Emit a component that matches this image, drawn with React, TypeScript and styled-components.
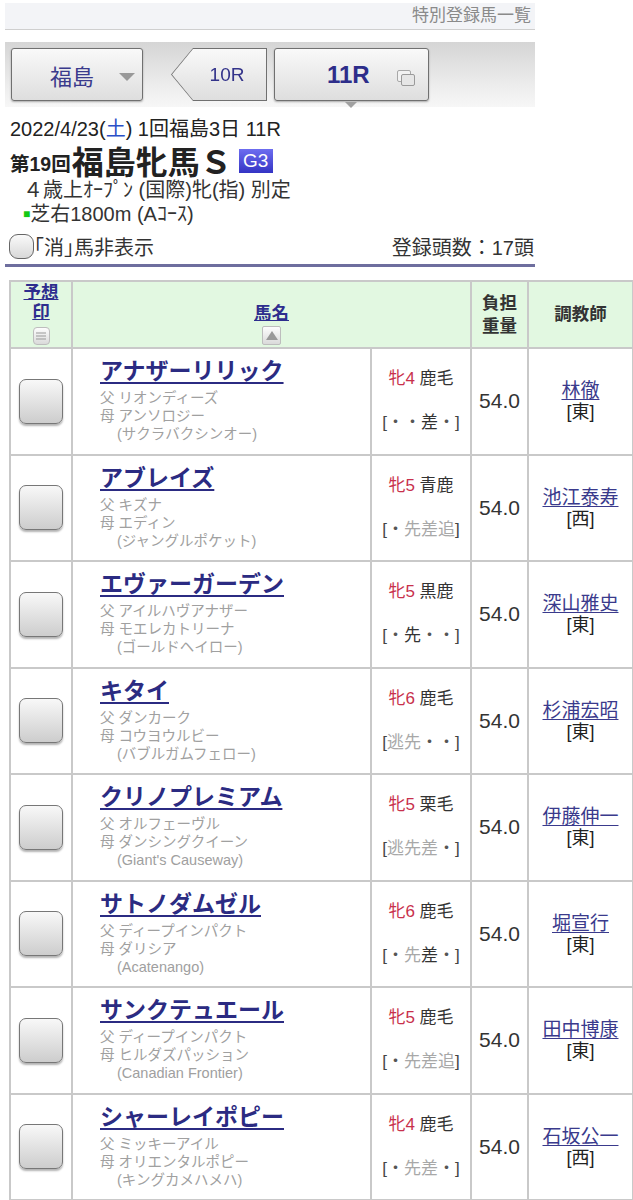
import React from "react";
import styled, { createGlobalStyle } from "styled-components";

const GlobalStyle = createGlobalStyle`
  body {
    margin: 0;
    background: #fff;
    font-family: "Liberation Sans", "Noto Sans CJK JP", sans-serif;
    color: #222;
  }
`;

interface Horse {
  name: string;
  sire: string;
  dam: string;
  damSire: string;
  sex: string;
  coat: string;
  style: string;
  strong: number[];
  trainer: string;
  belong: string;
}

const horses: Horse[] = [
  { name: "アナザーリリック", sire: "リオンディーズ", dam: "アンソロジー", damSire: "(サクラバクシンオー)", sex: "牝4", coat: "鹿毛", style: "・・差・", strong: [2], trainer: "林徹", belong: "東" },
  { name: "アブレイズ", sire: "キズナ", dam: "エディン", damSire: "(ジャングルポケット)", sex: "牝5", coat: "青鹿", style: "・先差追", strong: [], trainer: "池江泰寿", belong: "西" },
  { name: "エヴァーガーデン", sire: "アイルハヴアナザー", dam: "モエレカトリーナ", damSire: "(ゴールドヘイロー)", sex: "牝5", coat: "黒鹿", style: "・先・・", strong: [1], trainer: "深山雅史", belong: "東" },
  { name: "キタイ", sire: "ダンカーク", dam: "コウヨウルビー", damSire: "(バブルガムフェロー)", sex: "牝6", coat: "鹿毛", style: "逃先・・", strong: [], trainer: "杉浦宏昭", belong: "東" },
  { name: "クリノプレミアム", sire: "オルフェーヴル", dam: "ダンシングクイーン", damSire: "(Giant's Causeway)", sex: "牝5", coat: "栗毛", style: "逃先差・", strong: [], trainer: "伊藤伸一", belong: "東" },
  { name: "サトノダムゼル", sire: "ディープインパクト", dam: "ダリシア", damSire: "(Acatenango)", sex: "牝6", coat: "鹿毛", style: "・先差・", strong: [2], trainer: "堀宣行", belong: "東" },
  { name: "サンクテュエール", sire: "ディープインパクト", dam: "ヒルダズパッション", damSire: "(Canadian Frontier)", sex: "牝5", coat: "鹿毛", style: "・先差追", strong: [], trainer: "田中博康", belong: "東" },
  { name: "シャーレイポピー", sire: "ミッキーアイル", dam: "オリエンタルポピー", damSire: "(キングカメハメハ)", sex: "牝4", coat: "鹿毛", style: "・先差・", strong: [], trainer: "石坂公一", belong: "西" },
];

function App() {
  return (
    <Page>
      <GlobalStyle />
      <Head>
        <TitleBar>特別登録馬一覧</TitleBar>
        <NavBar>
          <PlaceButton>
            福島
            <DownMark />
          </PlaceButton>
          <PrevButton>
            <PrevInner>10R</PrevInner>
          </PrevButton>
          <RaceButton>
            11R
            <svg width="20" height="18" viewBox="0 0 20 18">
              <rect x="1.5" y="1.5" width="13" height="11" rx="1.5" fill="#f2f2f2" stroke="#a8a8a8" />
              <rect x="5.5" y="5.5" width="13" height="11" rx="1.5" fill="#e6e6e6" stroke="#9a9a9a" />
            </svg>
          </RaceButton>
        </NavBar>
        <Info>
          <DateLine>
            2022/4/23(<Sat>土</Sat>) 1回福島3日 11R
          </DateLine>
          <RaceTitle>
            <Kai>第19回</Kai>
            <RaceName>福島牝馬Ｓ</RaceName>
            <Grade>G3</Grade>
          </RaceTitle>
          <Cond>４歳上ｵｰﾌﾟﾝ (国際)牝(指) 別定</Cond>
          <Cond>
            <Turf>■</Turf>芝右1800m (Aｺｰｽ)
          </Cond>
        </Info>
        <FilterRow>
          <FilterLabel>
            <RoundCheck />
            ｢消｣馬非表示
          </FilterLabel>
          <span>登録頭数：17頭</span>
        </FilterRow>
      </Head>

      <Table>
        <colgroup>
          <col style={{ width: 62 }} />
          <col style={{ width: 299 }} />
          <col style={{ width: 100 }} />
          <col style={{ width: 57 }} />
          <col style={{ width: 105 }} />
        </colgroup>
        <thead>
          <tr>
            <HeadCell $bottom>
              <HeadLink>予想<br />印</HeadLink>
              <ListIcon>
                <svg width="10" height="8" viewBox="0 0 10 8">
                  <path d="M0 1h10M0 4h10M0 7h10" stroke="#999" strokeWidth="1" />
                </svg>
              </ListIcon>
            </HeadCell>
            <HeadCell colSpan={2} $bottom>
              <HeadLink>馬名</HeadLink>
              <SortIcon>
                <svg width="12" height="9" viewBox="0 0 12 9">
                  <path d="M6 0L12 9H0z" fill="#999" />
                </svg>
              </SortIcon>
            </HeadCell>
            <HeadCell>負担<br />重量</HeadCell>
            <HeadCell>調教師</HeadCell>
          </tr>
        </thead>
        <tbody>
          {horses.map((h) => (
            <Row key={h.name}>
              <Cell>
                <MarkBox />
              </Cell>
              <NameCell>
                <HorseName>{h.name}</HorseName>
                <Pedigree>父 {h.sire}</Pedigree>
                <Pedigree>母 {h.dam}</Pedigree>
                <Pedigree $indent>{h.damSire}</Pedigree>
              </NameCell>
              <Cell>
                <SexLine>
                  <Sex>{h.sex}</Sex> {h.coat}
                </SexLine>
                <StyleLine>
                  [
                  {h.style.split("").map((c, i) => (
                    <StyleChar key={i} $dot={c === "・"} $strong={h.strong.includes(i)}>
                      {c}
                    </StyleChar>
                  ))}
                  ]
                </StyleLine>
              </Cell>
              <Cell>
                <Weight>54.0</Weight>
              </Cell>
              <Cell>
                <Trainer>{h.trainer}</Trainer>
                <Belong>[{h.belong}]</Belong>
              </Cell>
            </Row>
          ))}
        </tbody>
      </Table>
    </Page>
  );
}

export default App;

const Page = styled.div`
  padding-top: 3px;
  width: 633px;
  overflow: hidden;
`;
const Head = styled.div`
  width: 530px;
  margin-left: 5px;
`;
const TitleBar = styled.div`
  height: 26px;
  line-height: 26px;
  background: #f3f4f7;
  border-bottom: 1px solid #cfcfcf;
  text-align: right;
  padding-right: 4px;
  color: #8a8a8a;
  font-size: 17px;
`;
const NavBar = styled.div`
  margin-top: 12px;
  height: 65px;
  display: flex;
  align-items: center;
  padding: 0 6px;
  background: linear-gradient(#d5d5d5, #ececec 65%, #f7f7f7);
`;
const Btn = styled.div`
  box-sizing: border-box;
  height: 53px;
  display: flex;
  align-items: center;
  justify-content: center;
  border: 1px solid #707070;
  border-radius: 3px;
  background: linear-gradient(#f9f9f9, #dedede);
  box-shadow: 0 1px 2px rgba(0, 0, 0, 0.3);
  color: #3a3a8c;
`;
const PlaceButton = styled(Btn)`
  width: 132px;
  font-size: 22px;
  justify-content: flex-start;
  padding-left: 38px;
  gap: 25px;
`;
const DownMark = styled.span`
  width: 0;
  height: 0;
  border-left: 8px solid transparent;
  border-right: 8px solid transparent;
  border-top: 8px solid #999;
  margin-top: 4px;
`;
const PrevButton = styled.div`
  margin-left: 28px;
  width: 96px;
  height: 53px;
  padding: 1px;
  box-sizing: border-box;
  background: #707070;
  clip-path: polygon(22px 0, 100% 0, 100% 100%, 22px 100%, 0 50%);
  filter: drop-shadow(0 1px 1px rgba(0, 0, 0, 0.3));
`;
const PrevInner = styled.div`
  height: 100%;
  display: flex;
  align-items: center;
  justify-content: center;
  padding-left: 16px;
  box-sizing: border-box;
  background: linear-gradient(#f9f9f9, #dedede);
  clip-path: polygon(21px 0, 100% 0, 100% 100%, 21px 100%, 0 50%);
  color: #33338a;
  font-size: 19px;
`;
const RaceButton = styled(Btn)`
  position: relative;
  margin-left: 7px;
  width: 155px;
  font-size: 24px;
  font-weight: bold;
  color: #2d2d8a;
  justify-content: flex-start;
  gap: 26px;
  padding-left: 52px;
  svg {
    margin-top: 6px;
  }
  &::after {
    content: "";
    position: absolute;
    left: 70px;
    bottom: -8px;
    border-left: 6px solid transparent;
    border-right: 6px solid transparent;
    border-top: 6px solid #a0a0a0;
  }
`;
const Info = styled.div`
  padding: 9px 0 0 5px;
`;
const DateLine = styled.div`
  font-size: 20px;
  line-height: 26px;
  color: #222;
`;
const Sat = styled.span`
  color: #2a4fc8;
`;
const RaceTitle = styled.div`
  display: flex;
  align-items: center;
  height: 36px;
  font-weight: bold;
  color: #222;
`;
const Kai = styled.span`
  font-size: 19.5px;
  margin-top: 5px;
`;
const RaceName = styled.span`
  font-size: 32px;
  margin-left: 1px;
`;
const Grade = styled.span`
  margin-left: 7px;
  margin-top: 2px;
  width: 34px;
  height: 24px;
  line-height: 24px;
  text-align: center;
  font-size: 19px;
  font-weight: normal;
  color: #fff;
  background: linear-gradient(#6d6df0, #3434c4);
`;
const Cond = styled.div`
  padding-left: 13px;
  font-size: 20px;
  line-height: 24px;
  color: #333;
`;
const Turf = styled.span`
  color: #14c814;
  font-size: 12px;
  vertical-align: 3px;
`;
const FilterRow = styled.div`
  margin-top: 6px;
  display: flex;
  justify-content: space-between;
  align-items: center;
  font-size: 20px;
  color: #333;
  padding: 0 1px 3px 4px;
  border-bottom: 3px solid #6e6e9e;
`;
const FilterLabel = styled.span`
  display: flex;
  align-items: center;
`;
const RoundCheck = styled.span`
  width: 25px;
  height: 25px;
  box-sizing: border-box;
  border: 1.5px solid #666;
  border-radius: 9px;
  background: linear-gradient(#fafafa, #d8d8d8);
`;
const Table = styled.table`
  margin: 13px 0 0 9px;
  width: 623px;
  table-layout: fixed;
  border-collapse: collapse;
  border: 2px solid #c9c9c9;
  td,
  th {
    border: 2px solid #c9c9c9;
  }
`;
const HeadCell = styled.th<{ $bottom?: boolean }>`
  height: 64px;
  padding: 0 0 ${({ $bottom }) => ($bottom ? "1px" : "0")};
  background: #e2f8e1;
  font-size: 17.5px;
  line-height: 23px;
  color: #333;
  vertical-align: ${({ $bottom }) => ($bottom ? "bottom" : "middle")};
`;
const HeadLink = styled.span`
  display: block;
  color: #2e2e8e;
  text-decoration: underline;
  line-height: 20px;
`;
const ListIcon = styled.span`
  display: inline-flex;
  align-items: center;
  justify-content: center;
  width: 17px;
  height: 18px;
  margin-top: 5px;
  border: 1px solid #bdbdbd;
  border-radius: 4px;
  background: linear-gradient(#fdfdfd, #dadada);
  box-sizing: border-box;
`;
const SortIcon = styled(ListIcon)`
  width: 19px;
  height: 19px;
  margin-top: 2px;
  border-radius: 2px;
`;
const Row = styled.tr`
  height: 106.5px;
`;
const Cell = styled.td`
  padding: 0;
  text-align: center;
  vertical-align: middle;
`;
const MarkBox = styled.div`
  margin: 0 auto;
  width: 44px;
  height: 45px;
  box-sizing: border-box;
  border: 1.5px solid #777;
  border-radius: 7px;
  background: linear-gradient(#f8f8f8, #cdcdcd);
  box-shadow: 0 2px 2px rgba(0, 0, 0, 0.3);
`;
const NameCell = styled.td`
  padding: 7px 0 0 27px;
  vertical-align: top;
  text-align: left;
`;
const HorseName = styled.div`
  font-size: 23px;
  line-height: 30px;
  font-weight: bold;
  color: #2b2b82;
  text-decoration: underline;
  text-underline-offset: 3px;
  margin-bottom: 3px;
`;
const Pedigree = styled.div<{ $indent?: boolean }>`
  font-size: 14.5px;
  line-height: 18px;
  color: #a0a0a0;
  padding-left: ${({ $indent }) => ($indent ? "17px" : "0")};
`;
const SexLine = styled.div`
  font-size: 17px;
  line-height: 22px;
  color: #333;
  margin-bottom: 22px;
`;
const Sex = styled.span`
  color: #c8304c;
`;
const StyleLine = styled.div`
  font-size: 17px;
  line-height: 22px;
  color: #444;
`;
const StyleChar = styled.span<{ $dot: boolean; $strong: boolean }>`
  color: ${({ $dot, $strong }) => ($strong ? "#333" : $dot ? "#555" : "#a8a8a8")};
`;
const Weight = styled.div`
  font-size: 21px;
  color: #333;
`;
const Trainer = styled.div`
  font-size: 19px;
  line-height: 23px;
  color: #3a3a8c;
  text-decoration: underline;
  text-underline-offset: 2px;
`;
const Belong = styled.div`
  font-size: 18px;
  line-height: 21px;
  color: #222;
`;
